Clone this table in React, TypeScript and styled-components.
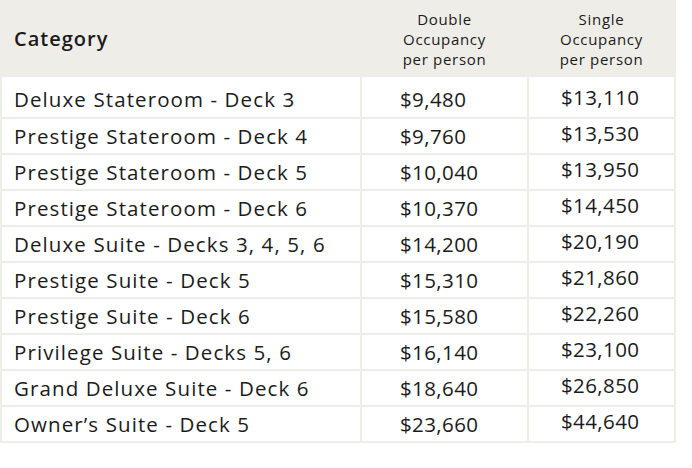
import { createGlobalStyle, styled } from 'styled-components'

const rates = [
    { category: 'Deluxe Stateroom - Deck 3', double: '$9,480', single: '$13,110' },
    { category: 'Prestige Stateroom - Deck 4', double: '$9,760', single: '$13,530' },
    { category: 'Prestige Stateroom - Deck 5', double: '$10,040', single: '$13,950' },
    { category: 'Prestige Stateroom - Deck 6', double: '$10,370', single: '$14,450' },
    { category: 'Deluxe Suite - Decks 3, 4, 5, 6', double: '$14,200', single: '$20,190' },
    { category: 'Prestige Suite - Deck 5', double: '$15,310', single: '$21,860' },
    { category: 'Prestige Suite - Deck 6', double: '$15,580', single: '$22,260' },
    { category: 'Privilege Suite - Decks 5, 6', double: '$16,140', single: '$23,100' },
    { category: 'Grand Deluxe Suite - Deck 6', double: '$18,640', single: '$26,850' },
    { category: 'Owner\u2019s Suite - Deck 5', double: '$23,660', single: '$44,640' },
]

const App = () => {
    return (
        <>
            <Global />
            <Table>
                <colgroup>
                    <col style={{ width: 358 }} />
                    <col style={{ width: 165 }} />
                    <col style={{ width: 145 }} />
                </colgroup>
                <thead>
                    <tr>
                        <HeadCell>Category</HeadCell>
                        <SmallHead>Double<br />Occupancy<br />per person</SmallHead>
                        <SmallHead>Single<br />Occupancy<br />per person</SmallHead>
                    </tr>
                </thead>
                <tbody>
                    {rates.map(({ category, double, single }, i) => (
                        <Row key={category} $first={i === 0}>
                            <Cell>{category}</Cell>
                            <Price $pad={38}>{double}</Price>
                            <Price $pad={32} $lift>{single}</Price>
                        </Row>
                    ))}
                </tbody>
            </Table>
        </>
    )
}

export default App

const Global = createGlobalStyle`
body {
    margin: 0;
    background: #ffffff;
    font-family: "Open Sans", Lato, sans-serif;
    font-variant-ligatures: none;
    color: #1b1b1b;
}
`

const Table = styled.table`
width: 676px;
border-collapse: separate;
border-spacing: 2px;
background: #efede8;
table-layout: fixed;
margin: 0;
`

const HeadCell = styled.th`
height: 73px;
padding: 0 0 0 12px;
text-align: left;
font-size: 20px;
font-weight: 600;
letter-spacing: 1px;
`

const SmallHead = styled.th`
padding: 0;
text-align: center;
font-size: 15px;
font-weight: 500;
line-height: 20px;
letter-spacing: 0.7px;
`

const Cell = styled.td`
background: #ffffff;
padding: 0 0 1px 12px;
font-size: 20.5px;
line-height: 22px;
letter-spacing: 1.1px;
white-space: nowrap;
`

const Price = styled(Cell)<{ $pad: number; $lift?: boolean }>`
padding-left: ${(p) => p.$pad}px;
padding-bottom: ${(p) => (p.$lift ? '6px' : '1px')};
letter-spacing: 0.4px;
`

const Row = styled.tr<{ $first?: boolean }>`
height: ${(p) => (p.$first ? '40px' : '34px')};

& > td {
    padding-top: ${(p) => (p.$first ? '5px' : '0')};
}
`
